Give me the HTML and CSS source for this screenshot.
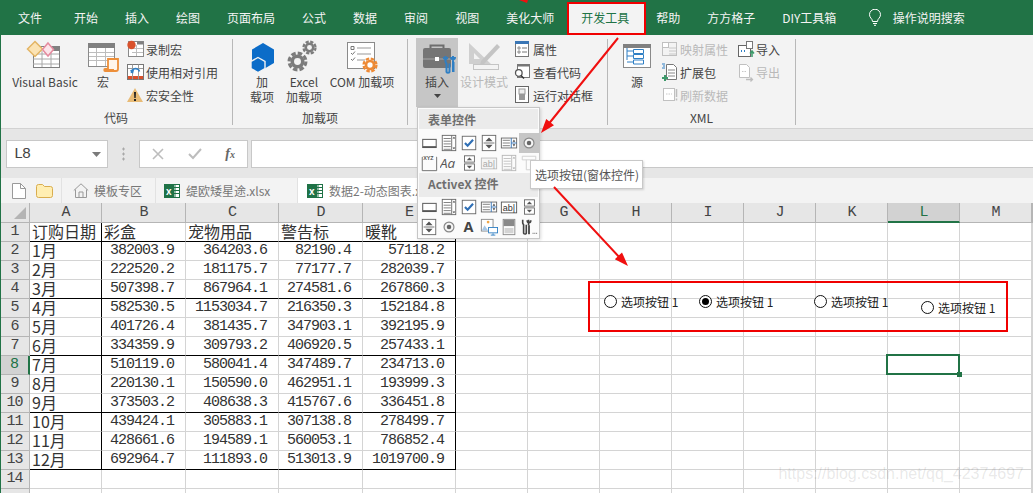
FILE: index.html
```html
<!DOCTYPE html>
<html lang="zh">
<head>
<meta charset="utf-8">
<title>Excel 开发工具</title>
<link rel="stylesheet" href="styles.css">
</head>
<body>
<svg class="defs" width="0" height="0" aria-hidden="true">
  <symbol id="i-button" viewBox="0 0 20 20"><rect x="3" y="6" width="15" height="9" fill="#fff" stroke="#666" stroke-width="1.2"/><path d="M3 14.5h15" stroke="#555" stroke-width="2"/></symbol>
  <symbol id="i-list" viewBox="0 0 20 20"><rect x="2.5" y="1.5" width="15" height="17" fill="#fff" stroke="#666"/><path d="M4 5h8M4 8h8M4 11h8M4 14h8M4 17h8" stroke="#777"/><path d="M13 1.5v17" stroke="#666"/><path d="M14 5h3l-1.500-2zM14 15h3l-1.500 2z" fill="#444"/></symbol>
  <symbol id="i-check" viewBox="0 0 20 20"><rect x="2.500" y="2.500" width="15" height="15" fill="#fff" stroke="#666"/><path d="M5.500 10l3 3 6-6.500" fill="none" stroke="#2f6fb5" stroke-width="2.400"/></symbol>
  <symbol id="i-spin" viewBox="0 0 20 20"><rect x="2.500" y="1.500" width="15" height="17" fill="#fff" stroke="#666"/><path d="M4 10h12" stroke="#666"/><path d="M6 8h8l-4-4zM6 12h8l-4 4z" fill="#555"/></symbol>
  <symbol id="i-listbox" viewBox="0 0 20 20"><rect x="1.500" y="4.500" width="17" height="11" fill="#fff" stroke="#666"/><path d="M3 7h8M3 10h8M3 13h8" stroke="#777"/><path d="M12.500 4.500v11M12.500 10h6" stroke="#2f6fb5"/><path d="M14 8.500h3l-1.500-2.500zM14 11.500h3l-1.500 2.500z" fill="#444"/></symbol>
  <symbol id="i-radio" viewBox="0 0 20 20"><circle cx="10" cy="10" r="5.500" fill="#f4f4f4" stroke="#888" stroke-width="1.300"/><circle cx="10" cy="10" r="2.500" fill="#666"/></symbol>
  <symbol id="i-updown" viewBox="0 0 20 20"><rect x="5" y="2" width="11" height="7" fill="#fff" stroke="#666"/><rect x="5" y="11" width="11" height="7" fill="#fff" stroke="#666"/><path d="M7.500 7h6l-3-3zM7.500 13h6l-3 3z" fill="#555"/></symbol>
  <symbol id="i-gear-dark" viewBox="0 0 20 20"><circle cx="10" cy="10" r="5" fill="none" stroke="currentColor" stroke-width="3.400"/><circle cx="10" cy="10" r="8" fill="none" stroke="currentColor" stroke-width="3" stroke-dasharray="4.280 2"/></symbol>
</svg>
<div class="page">
  <nav class="tabs">
    <span class="tab tab-file">文件</span>
    <span class="tab">开始</span>
    <span class="tab">插入</span>
    <span class="tab">绘图</span>
    <span class="tab">页面布局</span>
    <span class="tab">公式</span>
    <span class="tab">数据</span>
    <span class="tab">审阅</span>
    <span class="tab">视图</span>
    <span class="tab">美化大师</span>
    <span class="tab tab-active">开发工具</span>
    <span class="tab">帮助</span>
    <span class="tab">方方格子</span>
    <span class="tab">DIY工具箱</span>
    <span class="tell">
      <svg width="14" height="17" viewBox="0 0 14 17"><path d="M4.500 12.500C4.500 9.500 1.500 9 1.500 5.700a5.500 5.500 0 0 1 11 0c0 3.300-3 3.800-3 6.800zM5 14.500h4M6 16.300h2" fill="none" stroke="#fff"/></svg>
      <span>操作说明搜索</span>
    </span>
  </nav>

  <section class="ribbon">
    <div class="group g1">
      <div class="group-body">
        <div class="big w-vb">
          <svg class="big-icon" width="74" height="37" viewBox="0 0 74 37"><rect x="25.500" y="8.500" width="26" height="21" fill="#fff" stroke="#808080"/><path d="M25 16h26M25 21h26M25 26h26M34 13v16M43 13v16" stroke="#a8a8a8"/><rect x="40" y="8" width="12" height="5" fill="#808080"/><path d="M27 3.500l7.500 7.500-7.500 7.500-7.500-7.500z" fill="#fbe3b4" stroke="#e3b565" stroke-width="1.500"/><path d="M40 5l5.500 6.500-5.500 6.500-5.500-6.500z" fill="#fce4ea" stroke="#e58a9e" stroke-width="1.500"/></svg>
          <span>Visual Basic</span>
        </div>
        <div class="big w-macro">
          <svg class="big-icon" width="34" height="37" viewBox="0 0 34 37"><rect x="2.500" y="5.500" width="26" height="23" fill="#fff" stroke="#8a8a8a"/><rect x="2" y="5" width="27" height="5" fill="#808080"/><path d="M3 14.500h25M3 18.500h25M3 22.500h25M10.500 10v18M19.500 10v18" stroke="#bdbdbd"/><path d="M22 21h10v10c0 1-1 2-2 2H19c-1 0-1-2 0-2h3z" fill="#fff6ec" stroke="#ed8f3a" stroke-width="1.800"/><path d="M19 33h9v-2h-9z" fill="#ed8f3a"/></svg>
          <span>宏</span>
        </div>
        <div class="small-col">
          <div class="small"><svg width="18" height="23" viewBox="0 0 18 23"><rect x="1.500" y="3.500" width="15" height="15" fill="#fff" stroke="#8a8a8a"/><path d="M10 3.500h6.500v3H10z" fill="#808080"/><path d="M5 10.500h11M5 14.500h11M9.500 7v11" stroke="#bdbdbd"/><circle cx="4.500" cy="7" r="4.200" fill="#d9512c"/></svg><span>录制宏</span></div>
          <div class="small"><svg width="18" height="23" viewBox="0 0 18 23"><rect x="0.500" y="3.500" width="16" height="15" fill="#fff" stroke="#777"/><path d="M5.500 3.500v15M11.500 3.500v15M1 7.500h15" stroke="#9a9a9a"/><path d="M1 15h4v3H1zM6 15h5v3H6zM12 15h4v3h-4z" fill="#d9512c"/><path d="M4.500 12a4 3.500 0 0 1 8-1.500" fill="none" stroke="#2f7fc4" stroke-width="1.600"/><path d="M3 9h4l-1 4z" fill="#2f7fc4"/></svg><span>使用相对引用</span></div>
          <div class="small"><svg width="18" height="23" viewBox="0 0 18 23"><path d="M8 4l8 14H0z" fill="#e8bb76"/><path d="M7 8h2l-.3 6H7.300zM7 15h2v2H7z" fill="#222"/></svg><span>宏安全性</span></div>
        </div>
      </div>
      <div class="group-label">代码</div>
    </div>
    <div class="sep"></div>

    <div class="group g2">
      <div class="group-body">
        <div class="big w-addin">
          <svg class="big-icon" width="30" height="37" viewBox="0 0 30 37"><path d="M16 5l11 6.500V25l-11 6.500L5 25V11.500z" fill="#0b6cc8"/><path d="M11 19.500l7 4v7l-7 4-7-4v-7z" fill="#0b6cc8" stroke="#f3f3f3" stroke-width="1.400"/></svg>
          <span>加</span><span>载项</span>
        </div>
        <div class="big w-excel">
          <svg class="big-icon gear-grey" width="46" height="37" viewBox="0 0 46 37"><use href="#i-gear-dark" x="6" y="13" width="21" height="21"/><use href="#i-gear-dark" x="21" y="2" width="15" height="15"/></svg>
          <span>Excel</span><span>加载项</span>
        </div>
        <div class="big w-com">
          <svg class="big-icon gear-orange" width="70" height="37" viewBox="0 0 70 37"><rect x="20.500" y="4.500" width="27" height="26" fill="#fff" stroke="#8a8a8a"/><path d="M24 8.500h3v3h-3zM24 15l1.500 1.500 2.500-3M24 21l1.500 1.500 2.500-3" fill="none" stroke="#777"/><path d="M30 10h14M30 16h14M30 22h8" stroke="#999"/><use href="#i-gear-dark" x="35" y="19" width="16" height="16"/></svg>
          <span>COM 加载项</span>
        </div>
      </div>
      <div class="group-label">加载项</div>
    </div>
    <div class="sep"></div>

    <div class="group g3">
      <div class="group-body">
        <div class="big w-insert">
          <svg class="big-icon" width="42" height="37" viewBox="0 0 42 37"><path d="M14.500 10V7.500h13V10" fill="none" stroke="#6e6e6e" stroke-width="2"/><rect x="7" y="10" width="28" height="20" rx="2" fill="#757575"/><path d="M7 21h28" stroke="#a8a8a8"/><rect x="19" y="19" width="4" height="4" fill="#fff"/><path d="M29.500 18v5.500c0 1 .7 1.500 1 2V34c0 1 3 1 3 0v-8.500M37 18v7M35 19c0 3 4 3 4 0" fill="none" stroke="#2f7fc4" stroke-width="2"/><path d="M27.500 19c0 3 4 3 4 0" fill="none" stroke="#2f7fc4" stroke-width="1.500"/><rect x="36" y="24" width="2.500" height="10" fill="#2f7fc4"/></svg>
          <span>插入</span>
          <svg class="caret" width="7" height="4" viewBox="0 0 7 4"><path d="M0 0h7L3.500 4z" fill="#444"/></svg>
        </div>
        <div class="big w-design off">
          <svg class="big-icon" width="48" height="37" viewBox="0 0 48 37"><path d="M9 5l22 21H9zM14 15v6h6z" fill="#cfcfcf" fill-rule="evenodd"/><path d="M21 23L37 6l3 3-16 17-4 1z" fill="#c4c4c4"/><rect x="13.500" y="26.500" width="25" height="5" fill="#f3f3f3" stroke="#c4c4c4"/></svg>
          <span>设计模式</span>
        </div>
        <div class="small-col sc3">
          <div class="small"><svg width="18" height="23" viewBox="0 0 18 23"><rect x="1.500" y="3.500" width="13" height="15" fill="#fff" stroke="#777"/><rect x="1" y="3" width="14" height="3" fill="#3a76b5"/><path d="M4 9h2v2H4zM4 13h2v2H4z" fill="none" stroke="#777" stroke-width=".8"/><path d="M8 10h5M8 14h5" stroke="#777"/></svg><span>属性</span></div>
          <div class="small"><svg width="18" height="23" viewBox="0 0 18 23"><rect x="3.500" y="3.500" width="12" height="13" fill="#fff" stroke="#777"/><rect x="3" y="3" width="13" height="2.500" fill="#777"/><circle cx="4.800" cy="12" r="3.300" fill="#fff" stroke="#555" stroke-width="1.300"/><path d="M7 14.500l3 3" stroke="#333" stroke-width="1.500"/></svg><span>查看代码</span></div>
          <div class="small"><svg width="18" height="23" viewBox="0 0 18 23"><rect x="1.500" y="2.500" width="13" height="16" fill="#fff" stroke="#666"/><rect x="5" y="5" width="6" height="5" fill="#eee" stroke="#999"/><rect x="5" y="10" width="6" height="6" fill="#999"/></svg><span>运行对话框</span></div>
        </div>
      </div>
    </div>
    <div class="sep"></div>

    <div class="group g4">
      <div class="group-body">
        <div class="big w-source">
          <svg class="big-icon" width="46" height="37" viewBox="0 0 46 37"><rect x="9.500" y="6.500" width="27" height="23" fill="#fff" stroke="#8a8a8a"/><rect x="9" y="6" width="28" height="4" fill="#808080"/><path d="M13 10v12M13 13h6M13 18h6M13 24h6" stroke="#2f7fc4" fill="none"/><path d="M19.500 11.500h10v4h-10zM19.500 16.500h10v4h-10zM19.500 22h10v4h-10z" fill="#fff" stroke="#2f7fc4"/></svg>
          <span>源</span>
        </div>
        <div class="small-col sc4a">
          <div class="small off"><svg width="18" height="23" viewBox="0 0 18 23"><rect x="1.500" y="4.500" width="6" height="5" fill="#fff" stroke="#c0c0c0"/><rect x="1.500" y="4.500" width="14" height="13" fill="none" stroke="#c0c0c0"/><path d="M8 10h7M8 13h7M8 16h7" stroke="#c8c8c8"/></svg><span>映射属性</span></div>
          <div class="small"><svg width="18" height="23" viewBox="0 0 18 23"><path d="M5.500 3.500h7l3 3v12h-10z" fill="#fff" stroke="#777"/><path d="M7 9h7M7 12h7M7 15h7" stroke="#888"/><path d="M1 3h3M2 5h2M1 7h3" stroke="#2f7fc4"/><path d="M3 14h2v2h2v2H5v2H3v-2H1v-2h2z" fill="#3d9a6a"/></svg><span>扩展包</span></div>
          <div class="small off"><svg width="18" height="23" viewBox="0 0 18 23"><rect x="2.500" y="4.500" width="11" height="12" fill="#fff" stroke="#c0c0c0"/><path d="M5 10h6" stroke="#c8c8c8" stroke-dasharray="1.500 1"/><path d="M15.500 5v8M15.500 14.500v2" stroke="#bdbdbd" stroke-width="1.500"/></svg><span>刷新数据</span></div>
        </div>
        <div class="small-col sc4b">
          <div class="small"><svg width="18" height="23" viewBox="0 0 18 23"><rect x="1.500" y="7.500" width="12" height="11" fill="#fff" stroke="#666"/><rect x="9.500" y="3.500" width="6" height="7" fill="#fff" stroke="#777"/><path d="M4 13h1M7 13h1" stroke="#2f7fc4" stroke-width="2"/><path d="M15 19v-5M13 15.500l2-2.500 2 2.500" fill="none" stroke="#3d9a6a" stroke-width="1.500"/></svg><span>导入</span></div>
          <div class="small off"><svg width="18" height="23" viewBox="0 0 18 23"><path d="M2.500 3.500h7l3 3v10h-10z" fill="#fff" stroke="#c0c0c0"/><path d="M5 10.500h5" stroke="#c8c8c8" stroke-dasharray="1.500 1"/><path d="M9 18.500h6M13.500 16.500l2 2-2 2" fill="none" stroke="#bdbdbd" stroke-width="1.300"/></svg><span>导出</span></div>
        </div>
      </div>
      <div class="group-label">XML</div>
    </div>
    <div class="sep"></div>
  </section>

  <section class="formula">
    <div class="namebox"><span>L8</span><svg width="9" height="5" viewBox="0 0 9 5"><path d="M0 0h9L4.500 5z" fill="#7a7a7a"/></svg></div>
    <div class="dots"></div>
    <div class="fbtns">
      <svg width="12" height="12" viewBox="0 0 12 12"><path d="M1 1l10 10M11 1L1 11" stroke="#bdbdbd" stroke-width="1.600"/></svg>
      <svg width="14" height="12" viewBox="0 0 14 12"><path d="M1 6l4 4 8-9" fill="none" stroke="#bdbdbd" stroke-width="2"/></svg>
      <span class="fx">f<small>x</small></span>
    </div>
    <div class="finput"></div>
  </section>

  <section class="docs">
    <div class="doc doc-tools">
      <svg width="14" height="16" viewBox="0 0 14 16"><path d="M.5.500h8l5 5v10H.5z" fill="#fff" stroke="#999"/><path d="M8.500.500v5h5" fill="none" stroke="#999"/></svg>
      <svg width="17" height="14" viewBox="0 0 17 14"><path d="M.5 2.500a2 2 0 0 1 2-2h4l2 2h6a2 2 0 0 1 2 2v7a2 2 0 0 1-2 2h-12a2 2 0 0 1-2-2z" fill="#ffeeb2" stroke="#d9ad4e"/></svg>
    </div>
    <div class="doc doc-home">
      <svg width="16" height="15" viewBox="0 0 16 15"><path d="M.8 7.500L8 .8l7.200 6.700M2.500 6.500v8h11v-8M6 14.500V9h4v5.500" fill="none" stroke="#999"/></svg>
      <span>模板专区</span>
    </div>
    <div class="doc doc-file">
      <svg width="16" height="16" viewBox="0 0 16 16"><rect x="7" y="1.500" width="8.500" height="13" fill="#fff" stroke="#1f7246"/><path d="M8 4.500h7M8 7.500h7M8 10.500h7M11 2v12" stroke="#1f7246"/><rect y="1" width="10" height="14" fill="#1f7246"/><text x="2" y="11.500" class="xl">x</text></svg>
      <span>缇欧矮星途.xlsx</span>
    </div>
    <div class="doc doc-active">
      <svg width="16" height="16" viewBox="0 0 16 16"><rect x="7" y="1.500" width="8.500" height="13" fill="#fff" stroke="#1f7246"/><path d="M8 4.500h7M8 7.500h7M8 10.500h7M11 2v12" stroke="#1f7246"/><rect y="1" width="10" height="14" fill="#1f7246"/><text x="2" y="11.500" class="xl">x</text></svg>
      <span>数据2-动态图表.xlsx</span>
    </div>
  </section>

  <main class="sheet">
    <div class="ch corner"><svg width="12" height="12" viewBox="0 0 12 12"><path d="M12 0v12H0z" fill="#b4b4b4"/></svg></div>
    <div class="ch">A</div><div class="ch">B</div><div class="ch">C</div><div class="ch">D</div><div class="ch">E</div><div class="ch">F</div><div class="ch">G</div><div class="ch">H</div><div class="ch">I</div><div class="ch">J</div><div class="ch">K</div><div class="ch ch-on">L</div><div class="ch">M</div><div class="ch"></div>

    <div class="rh">1</div><div class="t bb br">订购日期</div><div class="t bb">彩盒</div><div class="t bb">宠物用品</div><div class="t bb">警告标</div><div class="t bb br">暖靴</div><div></div><div></div><div></div><div></div><div></div><div></div><div></div><div></div><div></div>
    <div class="rh">2</div><div class="t br">1月</div><div class="n">382003.9</div><div class="n">364203.6</div><div class="n">82190.4</div><div class="n br">57118.2</div><div></div><div></div><div></div><div></div><div></div><div></div><div></div><div></div><div></div>
    <div class="rh">3</div><div class="t br">2月</div><div class="n">222520.2</div><div class="n">181175.7</div><div class="n">77177.7</div><div class="n br">282039.7</div><div></div><div></div><div></div><div></div><div></div><div></div><div></div><div></div><div></div>
    <div class="rh">4</div><div class="t bb br">3月</div><div class="n bb">507398.7</div><div class="n bb">867964.1</div><div class="n bb">274581.6</div><div class="n bb br">267860.3</div><div></div><div></div><div></div><div></div><div></div><div></div><div></div><div></div><div></div>
    <div class="rh">5</div><div class="t br">4月</div><div class="n">582530.5</div><div class="n">1153034.7</div><div class="n">216350.3</div><div class="n br">152184.8</div><div></div><div></div><div></div><div></div><div></div><div></div><div></div><div></div><div></div>
    <div class="rh">6</div><div class="t br">5月</div><div class="n">401726.4</div><div class="n">381435.7</div><div class="n">347903.1</div><div class="n br">392195.9</div><div></div><div></div><div></div><div></div><div></div><div></div><div></div><div></div><div></div>
    <div class="rh">7</div><div class="t bb br">6月</div><div class="n bb">334359.9</div><div class="n bb">309793.2</div><div class="n bb">406920.5</div><div class="n bb br">257433.1</div><div></div><div></div><div></div><div></div><div></div><div></div><div></div><div></div><div></div>
    <div class="rh rh-on">8</div><div class="t br">7月</div><div class="n">510119.0</div><div class="n">580041.4</div><div class="n">347489.7</div><div class="n br">234713.0</div><div></div><div></div><div></div><div></div><div></div><div></div><div class="sel"><span class="handle"></span></div><div></div><div></div>
    <div class="rh">9</div><div class="t br">8月</div><div class="n">220130.1</div><div class="n">150590.0</div><div class="n">462951.1</div><div class="n br">193999.3</div><div></div><div></div><div></div><div></div><div></div><div></div><div></div><div></div><div></div>
    <div class="rh">10</div><div class="t bb br">9月</div><div class="n bb">373503.2</div><div class="n bb">408638.3</div><div class="n bb">415767.6</div><div class="n bb br">336451.8</div><div></div><div></div><div></div><div></div><div></div><div></div><div></div><div></div><div></div>
    <div class="rh">11</div><div class="t br">10月</div><div class="n">439424.1</div><div class="n">305883.1</div><div class="n">307138.8</div><div class="n br">278499.7</div><div></div><div></div><div></div><div></div><div></div><div></div><div></div><div></div><div></div>
    <div class="rh">12</div><div class="t br">11月</div><div class="n">428661.6</div><div class="n">194589.1</div><div class="n">560053.1</div><div class="n br">786852.4</div><div></div><div></div><div></div><div></div><div></div><div></div><div></div><div></div><div></div>
    <div class="rh">13</div><div class="t bb br">12月</div><div class="n bb">692964.7</div><div class="n bb">111893.0</div><div class="n bb">513013.9</div><div class="n bb br">1019700.9</div><div></div><div></div><div></div><div></div><div></div><div></div><div></div><div></div><div></div>
    <div class="rh">14</div><div></div><div></div><div></div><div></div><div></div><div></div><div></div><div></div><div></div><div></div><div></div><div></div><div></div><div></div>
    <div class="rh"></div><div></div><div></div><div></div><div></div><div></div><div></div><div></div><div></div><div></div><div></div><div></div><div></div><div></div><div></div>
  </main>

  <div class="shapes">
    <label class="radio r1"><i class="dot"></i><span>选项按钮 1</span></label>
    <label class="radio r2"><i class="dot dot-on"></i><span>选项按钮 1</span></label>
    <label class="radio r3"><i class="dot"></i><span>选项按钮 1</span></label>
    <label class="radio r4"><i class="dot"></i><span>选项按钮 1</span></label>
  </div>

  <div class="watermark">https://blog.csdn.net/qq_42374697</div>

  <div class="menu">
    <div class="menu-head">表单控件</div>
    <div class="menu-grid">
      <div class="cell"><svg><use href="#i-button"/></svg></div>
      <div class="cell"><svg><use href="#i-list"/></svg></div>
      <div class="cell"><svg><use href="#i-check"/></svg></div>
      <div class="cell"><svg><use href="#i-spin"/></svg></div>
      <div class="cell"><svg><use href="#i-listbox"/></svg></div>
      <div class="cell cell-on"><svg><use href="#i-radio"/></svg></div>
      <div class="cell"><svg viewBox="0 0 20 20"><path d="M3 3.500H2.500v15h16v-15H18" fill="none" stroke="#666"/><text x="3.500" y="7" class="xyz">XYZ</text></svg></div>
      <div class="cell"><svg viewBox="0 0 20 20"><text x="0" y="15.500" class="aa">Aa</text></svg></div>
      <div class="cell"><svg><use href="#i-updown"/></svg></div>
      <div class="cell"><svg viewBox="0 0 20 20"><rect x="1.500" y="4.500" width="17" height="12" fill="#f4f4f4" stroke="#bbb"/><text x="3" y="14" class="ab ab-off">ab|</text></svg></div>
      <div class="cell cell-off"><svg><use href="#i-list"/></svg></div>
      <div class="cell cell-off"><svg viewBox="0 0 20 20"><path d="M2.500 2.500h15v4h-15zM7 6.500v11h6v-11" fill="#fff" stroke="#999"/></svg></div>
    </div>
    <div class="menu-head head2">ActiveX 控件</div>
    <div class="menu-grid">
      <div class="cell"><svg><use href="#i-button"/></svg></div>
      <div class="cell"><svg><use href="#i-list"/></svg></div>
      <div class="cell"><svg><use href="#i-check"/></svg></div>
      <div class="cell"><svg><use href="#i-listbox"/></svg></div>
      <div class="cell"><svg viewBox="0 0 20 20"><rect x="1.500" y="4.500" width="17" height="12" fill="#fff" stroke="#555"/><text x="3" y="14" class="ab">ab|</text></svg></div>
      <div class="cell"><svg><use href="#i-updown"/></svg></div>
      <div class="cell"><svg><use href="#i-spin"/></svg></div>
      <div class="cell"><svg><use href="#i-radio"/></svg></div>
      <div class="cell"><svg viewBox="0 0 20 20"><text x="4" y="16" class="big-a">A</text></svg></div>
      <div class="cell"><svg viewBox="0 0 20 20"><rect x="1.500" y="1.500" width="13" height="13" fill="#fff" stroke="#888"/><circle cx="9" cy="4.500" r="1.500" fill="#f0a84a"/><path d="M2 14l3-6 4 6z" fill="#a9c8e6"/><rect x="9.500" y="10.500" width="10" height="6" fill="#fff" stroke="#2f7fc4"/><path d="M12 19h5M14.500 17v2" stroke="#2f7fc4"/></svg></div>
      <div class="cell"><svg viewBox="0 0 20 20"><rect x="3.500" y="1.500" width="13" height="17" fill="#fff" stroke="#888"/><rect x="4" y="2" width="12" height="7" fill="#8a8a8a"/><rect x="5" y="11" width="10" height="6" fill="#d4d4d4"/></svg></div>
      <div class="cell"><svg viewBox="0 0 20 20"><path d="M3 2v3.500c0 1 1 1.500 1 2V17c0 1 3 1 3 0V7.500M9.500 2v6M8 2.500c0 3.500 4 3.500 4 0" fill="none" stroke="#444" stroke-width="1.800"/><rect x="9" y="8" width="2" height="10" fill="#444"/><path d="M14 17h1M16 17h1M18 17h1" stroke="#444"/></svg></div>
    </div>
  </div>

  <div class="tip">选项按钮(窗体控件)</div>

  <svg class="marks" width="1033" height="493" viewBox="0 0 1033 493" aria-hidden="true">
    <path d="M618 38L547 126M554 187l67 72" fill="none" stroke="#f01010" stroke-width="2"/>
    <path d="M541 133l13-7.700-7.800-6.400zM628 266l-6-13.600-7.200 6.800zM519 0h9l-1 3z" fill="#f01010"/>
  </svg>
</div>
</body>
</html>
```

FILE: styles.css
```css
* { box-sizing: border-box; }
html, body { margin: 0; padding: 0; }
body {
  width: 1033px;
  height: 493px;
  overflow: hidden;
  background: #fff;
  font-family: "Noto Sans CJK SC", "Noto Sans", sans-serif;
  font-size: 12px;
  color: #444;
}
.defs { position: absolute; }
.page { position: relative; width: 1033px; height: 493px; overflow: hidden; }
.page::before {
  content: "";
  position: absolute;
  left: 0; top: 0; bottom: 0;
  width: 1px;
  background: #217346;
  z-index: 2;
}

/* top tabs */
.tabs {
  display: flex;
  align-items: center;
  height: 35px;
  background: #217346;
  color: #f4f4f4;
  white-space: nowrap;
}
.tab { position: relative; padding: 0 13.5px; line-height: 35px; z-index: 1; }
.tab-file { padding: 0 18.5px 0 18px; }
.tab-active { color: #217346; }
.tab-active::before {
  content: "";
  position: absolute;
  left: -1px; right: -3px; top: 2px; bottom: 0;
  background: #f3f3f3;
  border: 2px solid #f00000;
  z-index: -1;
}
.tell { display: flex; align-items: center; gap: 11px; margin-left: 18px; }

/* ribbon */
.ribbon {
  display: flex;
  height: 94px;
  background: #f3f3f3;
  border-bottom: 1px solid #d2d2d2;
}
.group { display: flex; flex-direction: column; padding-top: 3px; flex: none; }
.g1 { width: 232px; }
.g2 { width: 174px; }
.g3 { width: 199px; }
.g4 { width: 187px; }
.sep { width: 1px; height: 86px; margin-top: 4px; background: #b8b8b8; flex: none; }
.group-body { display: flex; height: 71px; }
.group-label { text-align: center; line-height: 18px; }

.big {
  display: flex;
  flex-direction: column;
  align-items: center;
  line-height: 15px;
  white-space: nowrap;
  flex: none;
}
.big-icon { display: block; flex: none; margin-bottom: -1px; }
.gear-grey { color: #7c7c7c; }
.gear-orange { color: #ee8a35; }
.off { color: #b9b9b9; }
.w-vb { width: 74px; margin-left: 8px; }
.w-macro { width: 34px; margin-left: 4px; }
.w-addin { width: 30px; margin-left: 14px; }
.w-excel { width: 46px; margin-left: 4px; }
.w-com { width: 70px; }
.w-insert { width: 42px; height: 69px; margin-left: 8px; background: #c6c6c6; }
.w-design { width: 48px; margin-left: 2px; }
.w-source { width: 46px; margin-left: 6px; }
.caret { margin-top: 5px; }

.small-col { display: flex; flex-direction: column; margin-left: 7px; flex: none; }
.sc3 { margin-left: 6px; }
.sc4a { margin-left: 1px; }
.sc4b { margin-left: 9px; }
.small { display: flex; align-items: center; gap: 1px; height: 23px; white-space: nowrap; }
.small svg { flex: none; }

/* formula bar */
.formula {
  display: flex;
  align-items: stretch;
  height: 49px;
  padding: 11px 0 10px 6px;
  background: #e6e6e6;
}
.namebox {
  display: flex;
  align-items: center;
  justify-content: space-between;
  width: 102px;
  padding: 0 6px 0 7px;
  background: #fff;
  border: 1px solid #c8c8c8;
  font-family: "Liberation Mono", monospace;
  font-size: 15px;
  letter-spacing: -1px;
  color: #444;
}
.dots {
  width: 31px;
  height: 14px;
  margin: 7px 0;
  background: radial-gradient(circle, #a8a8a8 1px, transparent 1.3px) center / 3px 5px repeat-y;
}
.fbtns {
  display: flex;
  align-items: center;
  justify-content: space-between;
  width: 109px;
  padding: 0 12px;
  background: #fff;
  border: 1px solid #c8c8c8;
}
.fx {
  font-family: "Liberation Serif", serif;
  font-style: italic;
  font-weight: bold;
  font-size: 14px;
  color: #666;
}
.fx small { font-size: 10px; }
.finput { flex: 1; margin-left: 3px; background: #fff; border: 1px solid #c8c8c8; border-right: 0; }

/* document tabs */
.docs { display: flex; height: 25px; background: #f3f3f3; color: #777; }
.doc { display: flex; align-items: center; height: 25px; border-right: 1px solid #e2e2e2; white-space: nowrap; flex: none; }
.doc svg { flex: none; }
.doc-tools { width: 62px; padding-left: 12px; gap: 10px; }
.doc-home { width: 94px; padding-left: 11px; gap: 5px; }
.doc-file { width: 142px; padding-left: 8px; gap: 6px; }
.doc-active { width: 120px; padding-left: 9px; gap: 6px; background: #fff; overflow: hidden; border: 0; }
.xl { font: bold 10px "Liberation Sans", sans-serif; fill: #fff; }

/* sheet */
.sheet {
  display: grid;
  grid-template-columns: 30px 72px 84px 93px 84px 93px repeat(8, 72px) 1px;
  grid-template-rows: 20px;
  grid-auto-rows: 19px;
  font-family: "Liberation Mono", monospace;
  font-size: 15px;
  letter-spacing: -1px;
  color: #444;
}
.sheet > div {
  border-right: 1px solid #d4d4d4;
  border-bottom: 1px solid #d4d4d4;
  line-height: 18px;
  white-space: nowrap;
}
.sheet > .ch {
  text-align: center;
  background: #e6e6e6;
  border-right-color: #b5b5b5;
  border-bottom-color: #b5b5b5;
  line-height: 19px;
}
.sheet > .corner { display: flex; align-items: flex-end; justify-content: flex-end; padding: 0 3px 3px 0; }
.sheet > .ch-on { background: #d2d2d2; color: #217346; border-bottom: 2px solid #217346; }
.sheet > .rh {
  text-align: center;
  background: #e6e6e6;
  border-right-color: #b5b5b5;
  border-bottom-color: #b5b5b5;
}
.sheet > .rh-on { background: #d2d2d2; color: #217346; border-right: 2px solid #217346; }
.sheet > .t {
  padding-left: 2px;
  font-family: "Noto Sans CJK SC", sans-serif;
  font-size: 16px;
  letter-spacing: 0;
  color: #333;
  line-height: 17px;
}
.sheet > .n { text-align: right; padding-right: 11px; color: #333; }
.sheet > .bb { border-bottom-color: #000; }
.sheet > .br { border-right-color: #000; }
.sheet > .sel { position: relative; z-index: 1; }
.sel::before {
  content: "";
  position: absolute;
  left: -2px; top: -2px; right: -1px; bottom: -1px;
  border: 2px solid #217346;
}
.handle {
  position: absolute;
  right: -3px; bottom: -3px;
  width: 5px; height: 5px;
  background: #217346;
}

/* floating shapes on the sheet */
.shapes {
  position: absolute;
  left: 588px; top: 281px;
  width: 420px; height: 51px;
  border: 2px solid #f00000;
}
.radio {
  position: absolute;
  display: flex;
  align-items: center;
  gap: 4px;
  height: 17px;
  color: #222;
  white-space: nowrap;
}
.r1 { left: 14px; top: 10px; }
.r2 { left: 109px; top: 10px; }
.r3 { left: 224px; top: 10px; }
.r4 { left: 331px; top: 16px; }
.dot {
  display: flex;
  align-items: center;
  justify-content: center;
  width: 13px; height: 13px;
  border: 1px solid #111;
  border-radius: 50%;
  background: #fff;
}
.dot-on::after { content: ""; width: 7px; height: 7px; border-radius: 50%; background: #000; }

.watermark {
  position: absolute;
  right: 9px; top: 465px;
  font: 16px/18px "Liberation Sans", sans-serif;
  color: rgba(90, 90, 90, .14);
  white-space: nowrap;
}

/* insert menu */
.menu {
  position: absolute;
  left: 417px; top: 107px;
  width: 123px; height: 132px;
  padding: 1px;
  background: #fbfbfb;
  border: 1px solid #c6c6c6;
  box-shadow: 1px 1px 3px rgba(0, 0, 0, .15);
  z-index: 3;
}
.menu-head {
  height: 20px;
  margin-bottom: 4px;
  padding-left: 9px;
  background: #ebebeb;
  font-weight: bold;
  line-height: 22px;
  color: #6f6f6f;
}
.head2 { height: 24px; margin-bottom: 0; }
.menu-grid { display: grid; grid-template-columns: repeat(6, 20px); grid-auto-rows: 20px; }
.cell { display: flex; align-items: center; justify-content: center; }
.cell svg { width: 18px; height: 18px; }
.cell-on { background: #c6c6c6; }
.cell-off { opacity: .45; }
.xyz { font: bold 6px "Liberation Sans", sans-serif; fill: #555; }
.aa { font: italic 15px "Open Sans", sans-serif; fill: #555; }
.ab { font: 10px "Liberation Sans", sans-serif; fill: #333; }
.ab-off { fill: #aaa; }
.big-a { font: bold 16px "Open Sans", sans-serif; fill: #444; }

.tip {
  position: absolute;
  left: 530px; top: 160px;
  width: 113px; height: 29px;
  padding-left: 4px;
  background: #fff;
  border: 1px solid #c8c8c8;
  box-shadow: 1px 1px 2px rgba(0, 0, 0, .15);
  line-height: 27px;
  color: #555;
  white-space: nowrap;
  z-index: 4;
}
.marks { position: absolute; left: 0; top: 0; z-index: 5; pointer-events: none; }
```
